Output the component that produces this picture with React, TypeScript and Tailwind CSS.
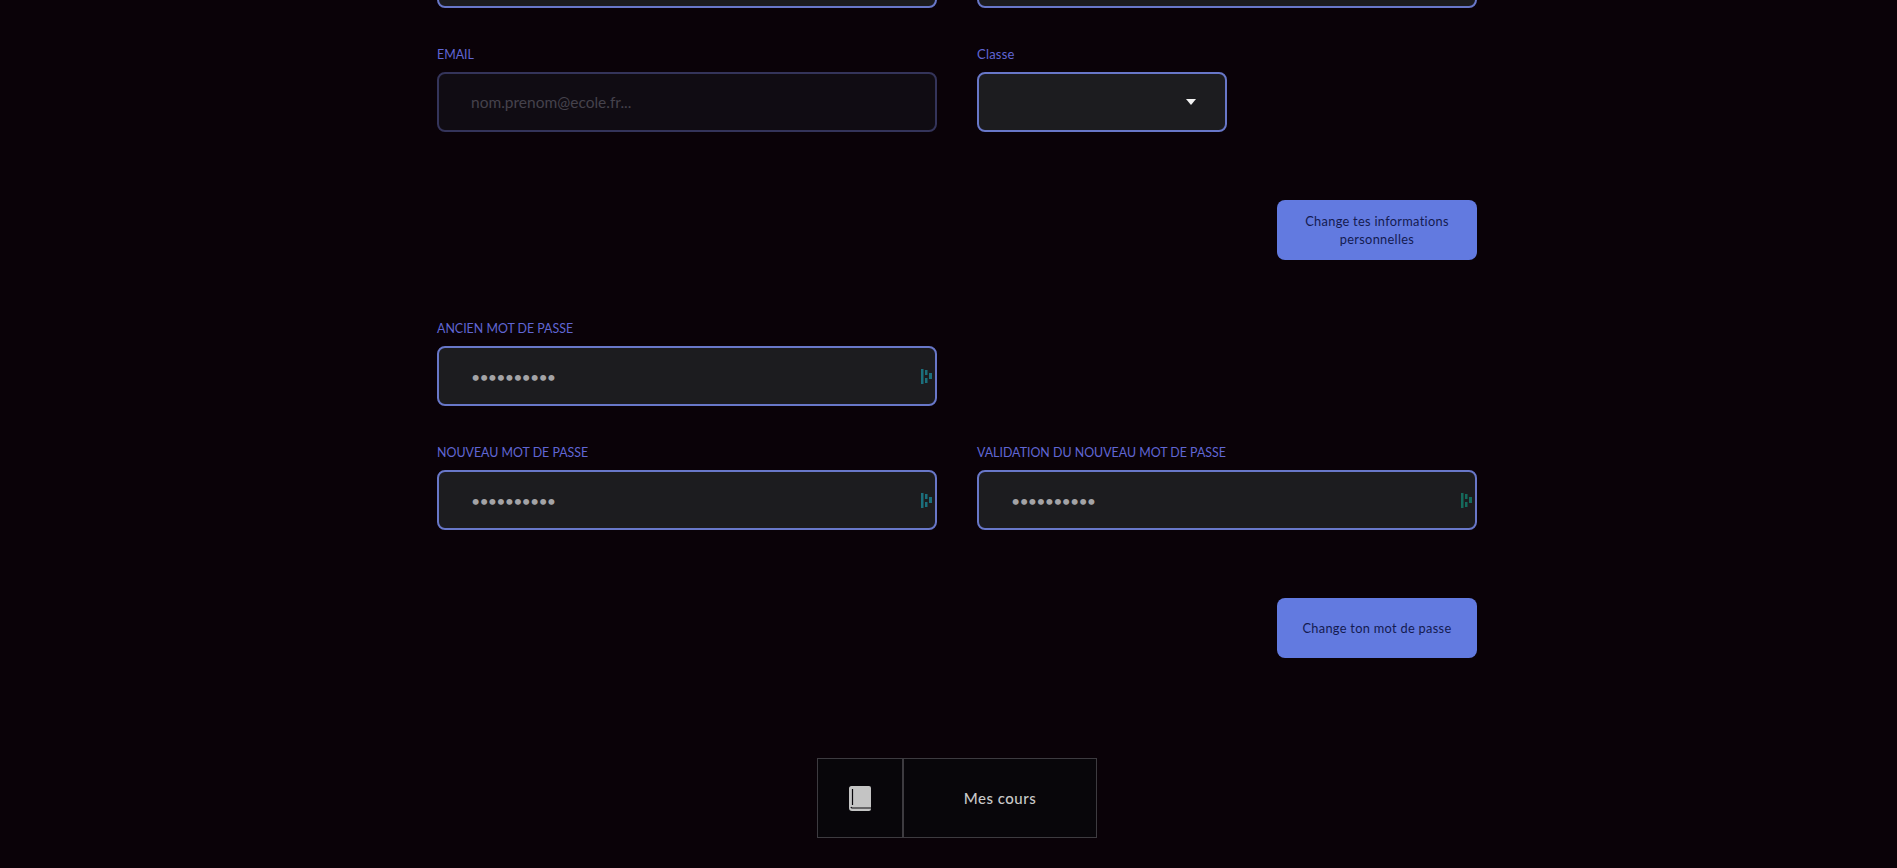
const font = { fontFamily: '"Lato", "Noto Sans", sans-serif' };

function EyeGlitch({ color }: { color: string }) {
  return (
    <svg width="11" height="15" viewBox="0 0 11 15" className="absolute right-[5px] top-[23px]" fill={color}>
      <rect x="0" y="0" width="2.5" height="15" />
      <rect x="4" y="1" width="2.5" height="5" />
      <rect x="4" y="9" width="2.5" height="5" />
      <rect x="8" y="4" width="3" height="6" />
    </svg>
  );
}

function Field({
  label,
  type = "text",
  value,
  placeholder,
  dim,
  icon,
  labelClass = "",
}: {
  label: string;
  type?: string;
  value?: string;
  placeholder?: string;
  dim?: boolean;
  icon?: string;
  labelClass?: string;
}) {
  return (
    <div className="w-[500px]">
      <label className={`mb-2 block h-[18px] text-[12.4px] leading-[18px] text-[#6066d4] ${labelClass}`}>{label}</label>
      <div className="relative">
        <input
          readOnly
          type={type}
          value={value}
          placeholder={placeholder}
          className={`block h-[60px] w-full rounded-lg border-2 pl-[32px] pr-4 text-[#a3a3a6] outline-none placeholder:text-[#45424c] ${
            type === "password" ? "text-[16px] tracking-[-0.85px]" : "text-[15.5px]"
          } ${dim ? "border-[#34345a] bg-[#100c13]" : "border-[#6877c8] bg-[#1c1c1f]"}`}
          style={font}
        />
        {icon && <EyeGlitch color={icon} />}
      </div>
    </div>
  );
}

function ActionButton({ children }: { children: React.ReactNode }) {
  return (
    <div className="mt-[68px] flex justify-end">
      <button className="flex h-[60px] w-[200px] items-center justify-center rounded-lg bg-[#627ae0] px-5 text-center text-[12.8px] leading-[18px] tracking-[0.3px] text-[#141a50]">
        {children}
      </button>
    </div>
  );
}

export default function App() {
  return (
    <div className="h-[868px] w-full overflow-hidden bg-[#0a0208]" style={font}>
      <div className="ml-[437px] -mt-[78px] flex w-[1040px] flex-col">
        <div className="flex gap-10">
          <Field label="NOM" labelClass="invisible" />
          <Field label="PRENOM" labelClass="invisible" />
        </div>

        <div className="mt-[38px] flex gap-10">
          <Field label="EMAIL" placeholder="nom.prenom@ecole.fr..." dim />
          <div className="w-[500px]">
            <label className="mb-2 block h-[18px] text-[13px] leading-[17px] tracking-[0.2px] text-[#6066d4]">Classe</label>
            <div className="flex h-[60px] w-[250px] items-center justify-end rounded-lg border-2 border-[#6877c8] bg-[#1c1c1f] pr-[29px]">
              <svg width="10" height="6" viewBox="0 0 10 6" fill="#f2f2f2">
                <path d="M0 0h10L5 6z" />
              </svg>
            </div>
          </div>
        </div>

        <ActionButton>Change tes informations personnelles</ActionButton>

        <div className="mt-[60px]">
          <Field label="ANCIEN MOT DE PASSE" type="password" value="aaaaaaaaaa" icon="#1b6f7c" />
        </div>

        <div className="mt-[38px] flex gap-10">
          <Field label="NOUVEAU MOT DE PASSE" type="password" value="aaaaaaaaaa" icon="#1b6f7c" />
          <Field label="VALIDATION DU NOUVEAU MOT DE PASSE" type="password" value="aaaaaaaaaa" icon="#156a5c" />
        </div>

        <ActionButton>Change ton mot de passe</ActionButton>

        <div className="mt-[100px] flex justify-center">
          <div className="flex h-[80px] w-[280px] border border-[#3d3b40] bg-[#08060a]">
            <div className="flex w-[86px] items-center justify-center border-r-2 border-[#3d3b40]">
              <svg width="22" height="25" viewBox="0 0 22 25">
                <path d="M2.5 0H20a2 2 0 0 1 2 2v21a2 2 0 0 1-2 2H3a3 3 0 0 1-3-3V2.5A2.5 2.5 0 0 1 2.5 0z" fill="#c4c4c4" />
                <path d="M3.5 3v16" stroke="#08060a" strokeWidth="1.2" fill="none" />
                <path d="M22 22H3.2a1.4 1.4 0 0 1-1.2-1" stroke="#08060a" strokeWidth="1.2" fill="none" />
              </svg>
            </div>
            <div className="flex flex-1 items-center justify-center text-[15px] font-medium tracking-[0.5px] text-[#c9c9c9]">
              Mes cours
            </div>
          </div>
        </div>
      </div>
    </div>
  );
}
